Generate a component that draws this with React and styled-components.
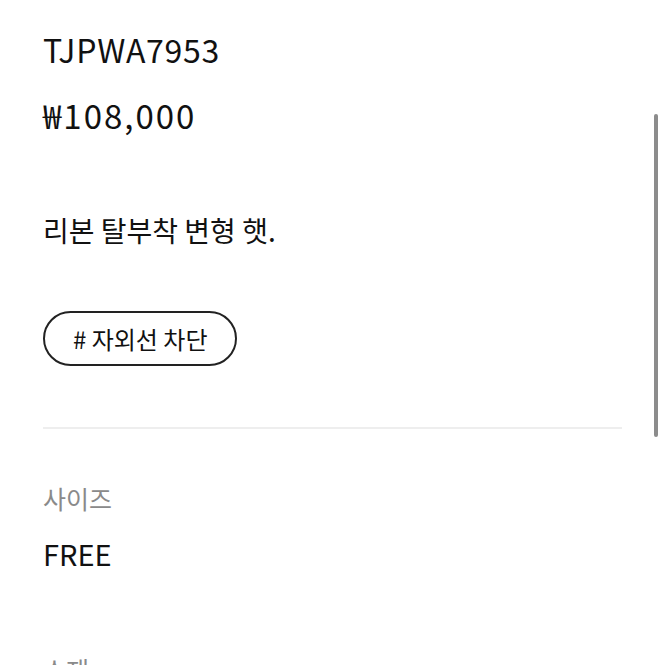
import styled, { createGlobalStyle } from 'styled-components'

const GlobalStyle = createGlobalStyle`
    html, body {
        margin: 0;
        padding: 0;
        background: #ffffff;
    }
    body {
        font-family: "Noto Sans CJK KR", "Noto Sans", sans-serif;
        color: #111111;
        overflow: hidden;
    }
`

const Page = styled.div({
    position: 'relative',
    width: '665px',
    height: '665px',
    overflow: 'hidden',
    boxSizing: 'border-box',
    padding: '24px 43px 0 43px',
})

const Code = styled.div({
    fontSize: '32px',
    lineHeight: '50px',
    letterSpacing: '0.7px',
})

const Price = styled.div({
    fontSize: '33px',
    lineHeight: '50px',
    marginTop: '16px',
    letterSpacing: '2px',
})

const Desc = styled.p({
    fontSize: '28px',
    lineHeight: '40px',
    margin: '70px 0 0 0',
})

const Tags = styled.div({
    display: 'flex',
    gap: '10px',
    marginTop: '61px',
})

const Tag = styled.span({
    display: 'inline-flex',
    alignItems: 'center',
    height: '55px',
    boxSizing: 'border-box',
    padding: '0 28px',
    border: '2px solid #222222',
    borderRadius: '28px',
    fontSize: '24px',
})

const Divider = styled.hr({
    border: 'none',
    borderTop: '2px solid #eeeeee',
    margin: '61px 0 0 0',
})

const Specs = styled.div({
    display: 'flex',
    flexDirection: 'column',
    gap: '76px',
    marginTop: '49px',
})

const Label = styled.div({
    fontSize: '25px',
    lineHeight: '40px',
    color: '#8a8a8a',
})

const Value = styled.div({
    fontSize: '29px',
    lineHeight: '40px',
    marginTop: '15px',
})

const ScrollThumb = styled.div({
    position: 'absolute',
    right: '7px',
    top: '114px',
    width: '4px',
    height: '323px',
    borderRadius: '2px',
    background: '#8c8c8c',
})

const specs = [
    { label: '사이즈', value: 'FREE' },
    { label: '소재', value: '' },
]

const App = () => {
    return (
        <Page>
            <GlobalStyle />
            <Code>TJPWA7953</Code>
            <Price>₩108,000</Price>
            <Desc>리본 탈부착 변형 햇.</Desc>
            <Tags>
                <Tag># 자외선 차단</Tag>
            </Tags>
            <Divider />
            <Specs>
                {specs.map(item => (
                    <div key={item.label}>
                        <Label>{item.label}</Label>
                        <Value>{item.value}</Value>
                    </div>
                ))}
            </Specs>
            <ScrollThumb />
        </Page>
    )
}

export default App
